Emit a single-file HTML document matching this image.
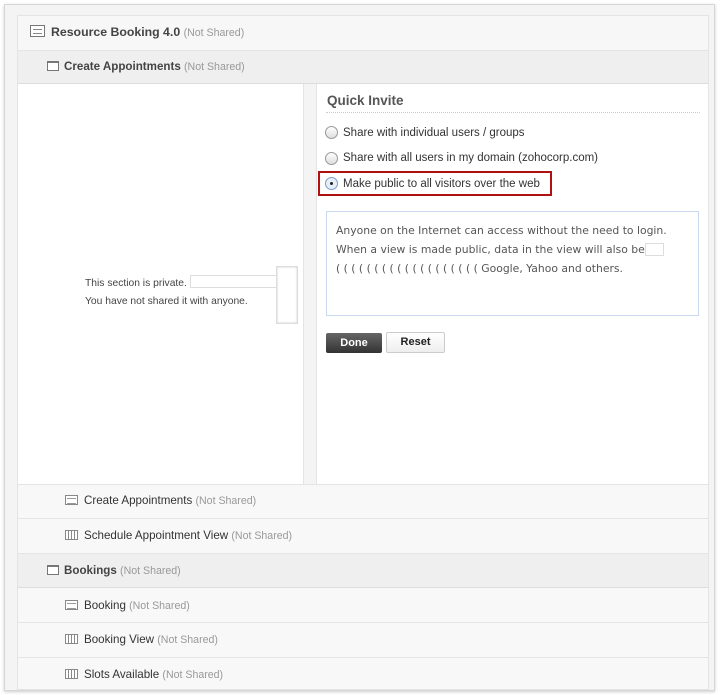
<!DOCTYPE html>
<html><head><style>
*{margin:0;padding:0;box-sizing:border-box}
body{width:720px;height:695px;background:#fff;font-family:"Liberation Sans",Arial,sans-serif;position:relative;overflow:hidden}
.frame{position:absolute;left:4px;top:4px;width:711px;height:687px;background:#f4f4f4;border:1px solid #d6d6d6;box-shadow:0 1px 3px rgba(0,0,0,.2)}
.abs{position:absolute}
.row{position:absolute;left:17px;width:692px;border:1px solid #e4e4e4;border-top:none;background:#f8f8f8}
.t{position:absolute;font-size:11.6px;color:#333;white-space:nowrap}
.ns{color:#999;font-size:10.6px;font-weight:normal}
.ic{position:absolute;width:12px;height:10px;border:1px solid #777;border-top-width:2px;background:#fff}
.ig{position:absolute;width:13px;height:10px;border:1px solid #888;background:repeating-linear-gradient(90deg,#fff 0 2px,#888 2px 3px)}
.if{position:absolute;width:13px;height:10px;border:1px solid #888;background:#fff}
.if:after{content:"";position:absolute;left:1px;top:2px;width:9px;height:4px;border-top:1px solid #999;border-bottom:1px solid #999}
.radio{position:absolute;width:13px;height:13px;border-radius:50%;border:1px solid #999;background:linear-gradient(#fff,#ddd)}
.rt{position:absolute;font-size:11.5px;color:#333;white-space:nowrap}
</style></head><body>
<div class="frame"></div>
<div class="row" style="top:15px;height:36px;border-top:1px solid #e4e4e4;background:#f7f7f7"></div>
<div class="abs" style="left:30px;top:25px;width:15px;height:12px;border:1px solid #777;background:#fff"></div>
<div class="abs" style="left:33px;top:29px;width:9px;height:5px;border-top:1px solid #888;border-bottom:1px solid #888"></div>
<div class="t" style="left:51px;top:25px;font-weight:bold;font-size:12.3px;color:#444">Resource Booking 4.0 <span class="ns">(Not Shared)</span></div>
<div class="row" style="top:51px;height:33px;background:#efefef;border-bottom:1px solid #ddd"></div>
<div class="ic" style="left:47px;top:61px"></div>
<div class="t" style="left:64px;top:60px;font-weight:bold;color:#444">Create Appointments <span class="ns">(Not Shared)</span></div>
<div class="abs" style="left:17px;top:84px;width:287px;height:400px;background:#fff;border-left:1px solid #e4e4e4;border-right:1px solid #e4e4e4"></div>
<div class="abs" style="left:316px;top:84px;width:393px;height:400px;background:#fff;border-left:1px solid #e4e4e4;border-right:1px solid #e4e4e4"></div>
<div class="t" style="left:85px;top:278px;font-size:10.3px;color:#444">This section is private.</div>
<div class="t" style="left:85px;top:296px;font-size:10.3px;color:#444">You have not shared it with anyone.</div>
<div class="abs" style="left:190px;top:275px;width:87px;height:13px;border:1px solid #ddd;border-right:none"></div>
<div class="abs" style="left:276px;top:266px;width:22px;height:58px;border:1px solid #ddd;box-shadow:inset 0 0 2px #ccc"></div>
<div class="t" style="left:327px;top:93px;font-size:13.5px;font-weight:bold;color:#555">Quick Invite</div>
<div class="abs" style="left:326px;top:112px;width:374px;border-top:1px dotted #ccc"></div>
<div class="radio" style="left:325px;top:126px"></div>
<div class="rt" style="left:343px;top:127px">Share with individual users / groups</div>
<div class="radio" style="left:325px;top:152px"></div>
<div class="rt" style="left:343px;top:152px">Share with all users in my domain (zohocorp.com)</div>
<div class="abs" style="left:318px;top:171px;width:234px;height:25px;border:2px solid #b01010"></div>
<div class="radio" style="left:325px;top:177px;border-color:#7a9cc8;background:#e6eef8"></div>
<div class="abs" style="left:330px;top:182px;width:3px;height:3px;background:#222;border-radius:50%"></div>
<div class="rt" style="left:343px;top:178px">Make public to all visitors over the web</div>
<div class="abs" style="left:326px;top:211px;width:373px;height:105px;border:1px solid #c8d8ee"></div>
<div class="t" style="left:336px;top:221px;font-family:'DejaVu Sans',sans-serif;font-size:10.8px;color:#555;line-height:19px">Anyone on the Internet can access without the need to login.<br>When a view is made public, data in the view will also be<br>( ( ( ( ( ( ( ( ( ( ( ( ( ( ( ( ( ( ( Google, Yahoo and others.</div>
<div class="abs" style="left:645px;top:243px;width:19px;height:13px;border:1px solid #ddd"></div>
<div class="abs" style="left:326px;top:333px;width:56px;height:20px;background:linear-gradient(#666,#333);border-radius:2px;color:#fff;font-size:11px;font-weight:bold;text-align:center;line-height:20px">Done</div>
<div class="abs" style="left:386px;top:332px;width:59px;height:21px;background:linear-gradient(#fff,#eee);border:1px solid #ccc;border-radius:2px;color:#222;font-size:11px;font-weight:bold;text-align:center;line-height:19px">Reset</div>
<div class="row" style="top:484px;height:35px;border-top:1px solid #e4e4e4"></div>
<div class="if" style="left:65px;top:495px"></div>
<div class="t" style="left:84px;top:494px">Create Appointments <span class="ns">(Not Shared)</span></div>
<div class="row" style="top:519px;height:35px"></div>
<div class="ig" style="left:65px;top:530px"></div>
<div class="t" style="left:84px;top:529px">Schedule Appointment View <span class="ns">(Not Shared)</span></div>
<div class="row" style="top:554px;height:34px;background:#efefef;border-bottom:1px solid #ddd"></div>
<div class="ic" style="left:47px;top:565px"></div>
<div class="t" style="left:64px;top:564px;font-weight:bold;color:#444">Bookings <span class="ns">(Not Shared)</span></div>
<div class="row" style="top:588px;height:35px"></div>
<div class="if" style="left:65px;top:600px"></div>
<div class="t" style="left:84px;top:599px">Booking <span class="ns">(Not Shared)</span></div>
<div class="row" style="top:623px;height:35px"></div>
<div class="ig" style="left:65px;top:634px"></div>
<div class="t" style="left:84px;top:633px">Booking View <span class="ns">(Not Shared)</span></div>
<div class="row" style="top:658px;height:32px"></div>
<div class="ig" style="left:65px;top:669px"></div>
<div class="t" style="left:84px;top:668px">Slots Available <span class="ns">(Not Shared)</span></div>
</body></html>
